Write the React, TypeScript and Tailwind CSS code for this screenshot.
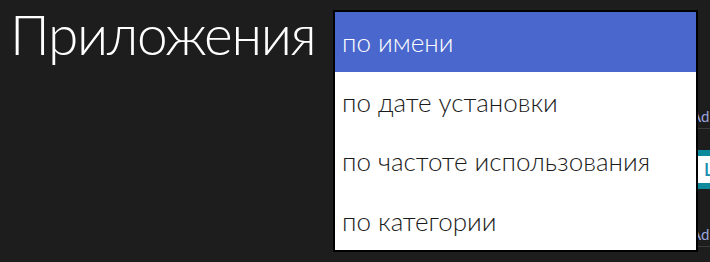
import React from 'react';

const options = ['по имени', 'по дате установки', 'по частоте использования', 'по категории'];

/** Полоски плиток приложений, которые видны справа из-под списка */
const BehindTiles: React.FC = () => (
    <div className="flex flex-col w-[22px] overflow-hidden">
        <div className="h-[104px]" />
        <div className="h-[24px] pl-[3px] text-[15px] leading-[24px] text-[#9aa4dd] whitespace-nowrap">Ad</div>
        <div className="h-px bg-[#3a3a3a]" />
        <div className="h-[21px]" />
        <div className="h-[39px] bg-[#0b8a9c] py-[6px]">
            <div className="h-full bg-white text-[#1a8fb0] text-[18px] font-semibold leading-[27px] pl-[16px]">L</div>
        </div>
        <div className="h-[33px]" />
        <div className="h-[24px] pl-[3px] text-[15px] leading-[24px] text-[#9aa4dd] whitespace-nowrap">Ad</div>
        <div className="h-px bg-[#3a3a3a]" />
    </div>
);

export default function App() {
    const selected = 0;

    return (
        <div
            className="relative w-[710px] h-[262px] bg-[#1d1d1d] overflow-hidden flex"
            style={{ fontFamily: 'Lato, "Open Sans", sans-serif' }}
        >
            {/* заголовок */}
            <h1 className="pl-[10px] text-[55px] leading-[68px] font-light text-white whitespace-nowrap tracking-[-1.3px]">
                Приложения
            </h1>
            <div className="ml-auto">
                <BehindTiles />
            </div>

            {/* выпадающий список сортировки */}
            <div className="absolute left-[333px] top-[10px] w-[365px] border-2 border-black bg-white">
                {options.map((opt, i) => (
                    <div
                        key={opt}
                        className={`h-[59.5px] flex items-center px-[7px] pt-[2px] text-[26px] font-light ${i === selected ? 'bg-[#4967cc] text-white' : 'text-[#1a1a1a]'}`}
                    >
                        {opt}
                    </div>
                ))}
            </div>
        </div>
    );
}
